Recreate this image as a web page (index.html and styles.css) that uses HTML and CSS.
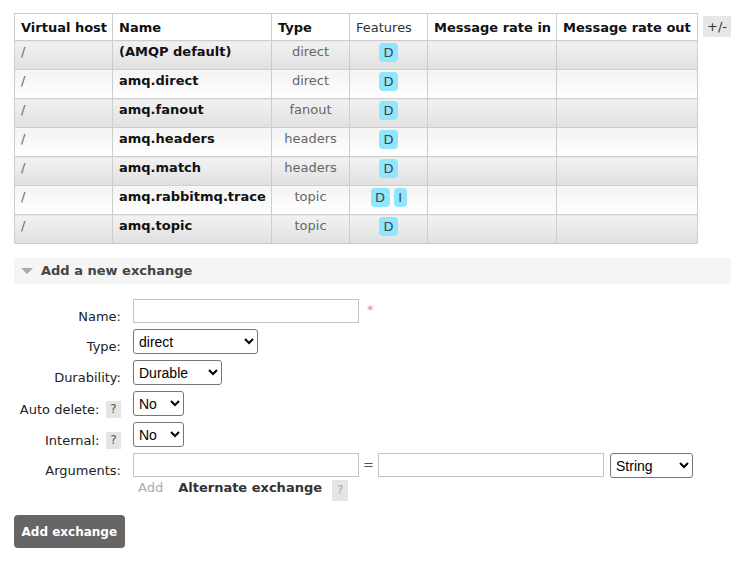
FILE: index.html
```html
<!DOCTYPE html>
<html lang="en">
<head>
<meta charset="utf-8">
<title>Exchanges</title>
<link rel="stylesheet" href="styles.css">
</head>
<body>
<div class="page">
  <div class="list-wrap">
    <table class="list">
      <colgroup>
        <col class="c-vhost"><col class="c-name"><col class="c-type"><col class="c-feat"><col class="c-in"><col class="c-out">
      </colgroup>
      <thead>
        <tr><th>Virtual host</th><th>Name</th><th>Type</th><th class="plain">Features</th><th>Message rate in</th><th>Message rate out</th></tr>
      </thead>
      <tbody>
        <tr class="alt1"><td class="vhost">/</td><td class="name">(AMQP default)</td><td class="type">direct</td><td class="feat"><span class="badge">D</span></td><td></td><td></td></tr>
        <tr class="alt2"><td class="vhost">/</td><td class="name">amq.direct</td><td class="type">direct</td><td class="feat"><span class="badge">D</span></td><td></td><td></td></tr>
        <tr class="alt1"><td class="vhost">/</td><td class="name">amq.fanout</td><td class="type">fanout</td><td class="feat"><span class="badge">D</span></td><td></td><td></td></tr>
        <tr class="alt2"><td class="vhost">/</td><td class="name">amq.headers</td><td class="type">headers</td><td class="feat"><span class="badge">D</span></td><td></td><td></td></tr>
        <tr class="alt1"><td class="vhost">/</td><td class="name">amq.match</td><td class="type">headers</td><td class="feat"><span class="badge">D</span></td><td></td><td></td></tr>
        <tr class="alt2"><td class="vhost">/</td><td class="name">amq.rabbitmq.trace</td><td class="type">topic</td><td class="feat"><span class="badge">D</span> <span class="badge">I</span></td><td></td><td></td></tr>
        <tr class="alt1"><td class="vhost">/</td><td class="name">amq.topic</td><td class="type">topic</td><td class="feat"><span class="badge">D</span></td><td></td><td></td></tr>
      </tbody>
    </table>
    <span class="toggle">+/-</span>
  </div>

  <div class="section">
    <h2 class="section-title"><svg class="tri" width="12" height="6" viewBox="0 0 12 6"><polygon points="0,0 12,0 6,6" fill="#a9a9a9"/></svg>Add a new exchange</h2>
    <form class="form-grid">
      <label class="lbl">Name:</label>
      <div class="fld"><input type="text" class="text"><span class="mand">*</span></div>

      <label class="lbl">Type:</label>
      <div class="fld"><select class="sel sel-type"><option>direct</option><option>fanout</option><option>headers</option><option>topic</option></select></div>

      <label class="lbl">Durability:</label>
      <div class="fld"><select class="sel sel-dur"><option>Durable</option><option>Transient</option></select></div>

      <label class="lbl">Auto delete: <span class="help">?</span></label>
      <div class="fld"><select class="sel sel-yn"><option>No</option><option>Yes</option></select></div>

      <label class="lbl">Internal: <span class="help">?</span></label>
      <div class="fld"><select class="sel sel-yn"><option>No</option><option>Yes</option></select></div>

      <label class="lbl">Arguments:</label>
      <div class="fld"><input type="text" class="text"><span class="eq">=</span><input type="text" class="text"><select class="sel sel-arg"><option>String</option><option>Number</option><option>Boolean</option><option>List</option></select></div>

      <span class="lbl-empty"></span>
      <div class="fld sub"><span class="add-link">Add</span><span class="alt-link">Alternate exchange</span><span class="help help-big">?</span></div>

      <div class="actions"><button type="button" class="btn">Add exchange</button></div>
    </form>
  </div>
</div>
</body>
</html>
```
FILE: styles.css
```css
* { box-sizing: border-box; }

body {
  margin: 0;
  background: #fff;
  color: #222;
  font-family: "DejaVu Sans", Verdana, sans-serif;
  font-size: 13px;
  line-height: 16px;
}

.page { padding: 13px 0 0 14px; }

.list-wrap {
  display: flex;
  align-items: flex-start;
}

table.list {
  border-collapse: collapse;
  table-layout: fixed;
  width: 683px;
}

.c-vhost { width: 98px; }
.c-name { width: 159px; }
.c-type { width: 78px; }
.c-feat { width: 78px; }
.c-in { width: 129px; }
.c-out { width: 141px; }

table.list th,
table.list td {
  border: 1px solid #cdcdcd;
  padding: 3px 6px 5px;
  text-align: left;
  vertical-align: top;
  white-space: nowrap;
}

table.list th {
  padding: 6px 6px 4px;
  font-weight: bold;
  color: #111;
  background: #fff;
}

table.list th.plain { font-weight: normal; color: #333; }

tr.alt1 td { background: linear-gradient(#f2f2f2, #e0e0e0); }
tr.alt2 td { background: linear-gradient(#f3f3f3, #ffffff); }

table.list td.vhost { color: #666; }
table.list td.name { font-weight: bold; color: #111; }
table.list td.type { color: #666; text-align: center; }
table.list td.feat { text-align: center; padding: 1px 6px 7px; }

.badge {
  display: inline-block;
  vertical-align: top;
  margin-top: 1px;
  padding: 0 4.5px;
  line-height: 19px;
  background: #8fe6fd;
  color: #444;
  border-radius: 4px;
}

.toggle {
  margin: 3px 0 0 5px;
  padding: 3px 4px;
  line-height: 15px;
  background: #e6e6e6;
  color: #333;
  white-space: nowrap;
}

.section { margin-top: 14px; }

.section-title {
  margin: 0;
  display: flex;
  align-items: center;
  gap: 8px;
  padding: 5px 0 5px 7px;
  background: #f5f5f5;
  color: #444;
  font-size: 13px;
  line-height: 16px;
  font-weight: bold;
}

.tri { display: block; }

.form-grid {
  display: grid;
  grid-template-columns: 107px auto;
  column-gap: 12px;
  row-gap: 6px;
  justify-content: start;
  align-items: start;
  margin-top: 15px;
}

.lbl {
  height: 24px;
  text-align: right;
  padding-top: 10px;
  color: #222;
  white-space: nowrap;
}

.fld {
  display: flex;
  align-items: flex-start;
}

.text {
  width: 226px;
  height: 24px;
  margin: 0;
  padding: 2px 4px;
  border: 1px solid #c4c4c4;
  border-radius: 0;
  font: 13px "DejaVu Sans", Verdana, sans-serif;
  background: #fff;
}

.mand {
  margin: 3px 0 0 8px;
  color: #ee8f8f;
}

.sel {
  height: 25px;
  margin: 0;
  padding: 0 0 0 1px;
  font-family: "Liberation Sans", Arial, sans-serif;
  font-size: 14px;
  color: #000;
  background: #fff;
  border: 1px solid #767676;
  border-radius: 3px;
}

.sel-type { width: 125px; }
.sel-dur { width: 89px; }
.sel-yn { width: 51px; }
.sel-arg { width: 83px; margin-left: 6px; }

.eq {
  width: 19px;
  text-align: center;
  line-height: 24px;
  color: #555;
}

.help {
  display: inline-block;
  margin-left: 2px;
  padding: 0 4.5px;
  font-size: 12px;
  line-height: 17px;
  vertical-align: 1px;
  background: #e4e4e4;
  color: #555;
}

.fld.sub { margin-top: -4px; }

.add-link { margin-left: 5px; color: #aaa; }
.alt-link { margin-left: 15px; font-weight: bold; color: #333; }

.help-big {
  margin-left: 10px;
  line-height: 21px;
  padding: 0 5px;
  vertical-align: top;
  color: #aaa;
}

.actions {
  grid-column: 1 / -1;
  margin-top: 8px;
}

.btn {
  height: 33px;
  padding: 0 7.5px;
  border: 0;
  border-radius: 4px;
  background: #666;
  color: #fff;
  font: bold 12px "DejaVu Sans", Verdana, sans-serif;
}
```
